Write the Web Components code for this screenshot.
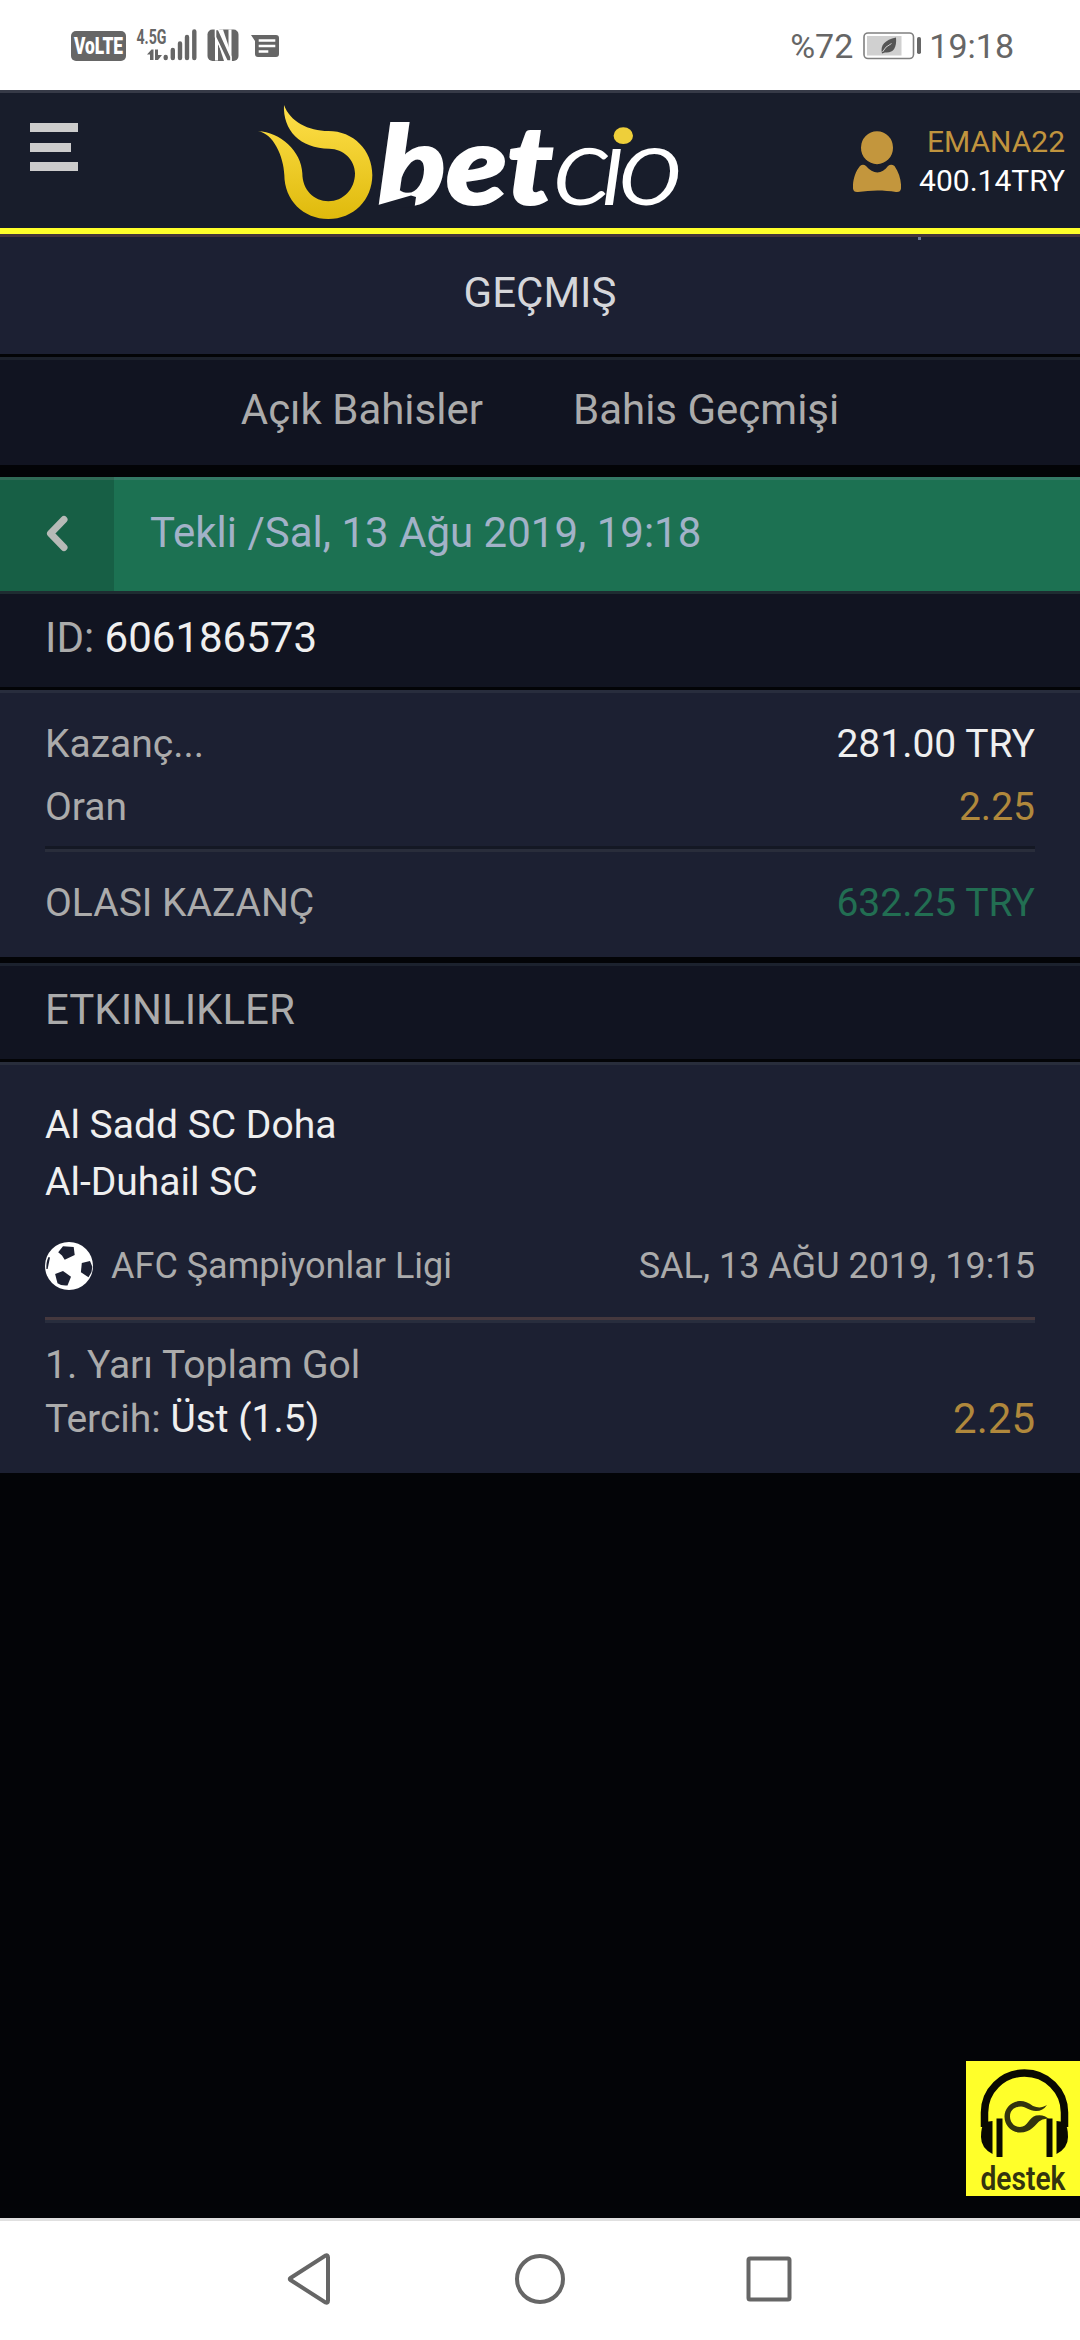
<!DOCTYPE html>
<html lang="tr">
<head>
<meta charset="utf-8">
<title>Betcio</title>
<style>
html,body{margin:0;padding:0;background:#030407}
body{font-family:Roboto,"Noto Sans",sans-serif;width:1080px;height:2340px;overflow:hidden}
</style>
</head>
<body>
<bet-app></bet-app>
<script>
const define = (name, html) => {
  const t = document.createElement('template');
  t.innerHTML = html;
  customElements.define(name, class extends HTMLElement {
    constructor() {
      super();
      this.attachShadow({mode: 'open'}).append(t.content.cloneNode(true));
    }
  });
};

define('status-bar', `
<style>
:host{display:flex;box-sizing:border-box;height:90px;background:#fff;color:#666;justify-content:space-between;padding:20px 66px 0 60px;font-size:34px;line-height:52px}
svg{display:block}
.r{display:flex}
.bat{margin:6px 7px 0 9px}
</style>
<svg width="230" height="50" viewBox="60 20 230 50" fill="#666">
  <rect x="71" y="31" width="55" height="30" rx="5"/>
  <text x="74" y="54" font-size="23" font-weight="900" fill="#fff" textLength="49" lengthAdjust="spacingAndGlyphs">VoLTE</text>
  <text x="136.500" y="44" font-size="20" font-weight="700" textLength="30" lengthAdjust="spacingAndGlyphs">4.5G</text>
  <path d="M147 54.500L151.500 49.500H153.500V60H150V54.500ZM155 49.500H158V55H162L158 60H155Z"/>
  <g stroke="#666" stroke-width="4.400" stroke-linecap="round"><path d="M165.700 57V58M172.800 50V58M180 43.500V58M187 37V58M194.300 31.500V58"/></g>
  <rect x="207.500" y="29.500" width="31" height="31.500" rx="5"/>
  <path d="M216.500 29V60.500M230 29.500V61" stroke="#fff" stroke-width="3"/>
  <path d="M217 29.500H223L230.500 52V61H224L216.500 38Z" fill="#fff"/>
  <path d="M215.500 29.500L218.500 29.500L231 57V61H227L215.500 37Z" fill="#666" stroke="#fff" stroke-width="1.600"/>
  <path d="M251 35H276Q279 35 279 38V54Q279 57 276 57H258Q255 57 255 54V41Z"/>
  <path d="M260 40.500H274M260 46H274M260 51.500H267" stroke="#fff" stroke-width="2.600" stroke-linecap="square"/>
</svg>
<div class="r"><span>%72</span>
<svg class="bat" width="60" height="40" viewBox="861 26 60 40">
  <rect x="863" y="33" width="49.500" height="25.500" rx="4" fill="none" stroke="#808080" stroke-width="1.600"/>
  <rect x="866" y="36" width="34.500" height="19.500" fill="#d0d0d0"/>
  <rect x="916" y="37" width="4" height="17" rx="1.800" fill="#666"/>
  <path d="M881 53.500C879 45 884 40 895 37.500C896 48 892 53.500 884 52.500L881 53.500Z" fill="#555"/>
  <path d="M881.500 52Q884 46.500 890.500 43.500" stroke="#d0d0d0" stroke-width="1" fill="none"/>
</svg>
<span>19:18</span></div>`);

define('site-logo', `
<style>:host{display:block}svg{display:block;overflow:visible}</style>
<svg width="430" height="128" viewBox="255 100 430 128">
  <defs>
    <linearGradient id="g" x1="0" y1="0" x2="0" y2="1"><stop offset="0" stop-color="#ffe04a"/><stop offset="1" stop-color="#dfba0c"/></linearGradient>
    <clipPath id="low"><rect x="545" y="147.500" width="145" height="70"/></clipPath>
  </defs>
  <path transform="translate(240 90) scale(.33333)" fill="url(#g)" d="M54 124C120 125 185 185 187 250C187 300 222 334 265 334C310 334 345 298 345 250C345 210 310 176 268 176C180 176 128 120 132 45C150 95 205 123 265 123C340 123 397 180 397 255C397 330 340 387 265 387C190 387 133 330 133 255C131 200 100 130 54 124Z"/>
  <g font-family="Lato,sans-serif" font-style="italic" fill="#fff">
    <text x="378" y="204" font-size="108" font-weight="900" textLength="175" lengthAdjust="spacingAndGlyphs" stroke="#fff" stroke-width="2">bet</text>
    <path d="M378 205L411 195.500L416 197L414.500 207.500H377Z" fill="#181d2b"/>
    <g clip-path="url(#low)"><text transform="scale(1.17 1)" x="473 513 528.800" y="204" font-size="108" font-weight="300" stroke="#fff" stroke-width="1.800">cio</text></g>
  </g>
  <ellipse cx="623.300" cy="135.700" rx="9.700" ry="8.400" fill="#eecf3a"/>
</svg>`);

define('site-header', `
<style>
:host{display:flex;box-sizing:border-box;height:147px;background:#181d2b;border-top:3px solid #363a47;border-bottom:3px solid #45353c;box-shadow:inset 0 -6px #ffff2a}
.burger{display:flex;flex-direction:column;gap:10.500px;padding:30px 0 0 30px;width:255px;box-sizing:border-box;flex:none}
.burger i{display:block;width:48px;height:9px;background:#ccc}
.burger i:nth-child(2){width:40.500px}
site-logo{margin-top:7px}
.user{margin-left:auto;display:flex;padding-right:15px}
svg{display:block;margin:35px 18px 0 0}
.t{padding-top:29px;text-align:right;font-size:30px;line-height:39px;color:#fff}
.t b{display:block;font-weight:400;color:#c0943e}
</style>
<div class="burger"><i></i><i></i><i></i></div>
<site-logo></site-logo>
<div class="user">
<svg width="48" height="66" viewBox="853 128 48 66" fill="#c3963d"><ellipse cx="877" cy="147.700" rx="16" ry="16.500"/><path d="M860 166Q863 163.500 866 166C873 174.500 882 174.500 888 166Q891 163.500 894.500 166C899.500 173 901.500 182 901 188.500Q900.500 192.500 896 192C884 190 871 190 858 192Q853.500 192.500 853 188.500C852.500 181 855 172 860 166Z"/></svg>
<div class="t"><b>EMANA22</b>400.14TRY</div></div>`);

define('page-title', `
<style>
:host{display:block;box-sizing:border-box;height:117px;background:#1c2033;text-align:center;font-size:42px;line-height:111px;color:#d5d6da}
:host::before{content:"";display:block;width:3px;height:3px;margin:0 0 -3px 918px;background:#6b7799}
</style><slot></slot>`);

define('tab-row', `
<style>
:host{display:flex;box-sizing:border-box;height:111px;justify-content:center;gap:90px;background:#111421;border-top:3px solid #030407;box-shadow:inset 0 3px #1c212c;font-size:42px;line-height:106px;color:#ababab}
</style><slot></slot>`);

define('coupon-bar', `
<style>
:host{display:flex;box-sizing:border-box;height:114px;margin-top:12px;background:#1c7152;font-size:42px;line-height:112px;color:#a2b2c8;box-shadow:inset 0 3px #347965}
.back{width:114px;background:#175f45;margin-right:36px;box-shadow:inset 0 3px #306a56}
svg{display:block}
</style>
<div class="back"><svg width="114" height="114" viewBox="0 477 114 114"><path d="M64 519.500L50.500 533.500L64 547.500" fill="none" stroke="#b7bab7" stroke-width="7" stroke-linecap="round" stroke-linejoin="round"/></svg></div>
<slot></slot>`);

define('section-bar', `
<style>
:host{display:block;box-sizing:border-box;height:99px;padding:0 45px;background:#111421;border-bottom:3px solid #030407;box-shadow:inset 0 3px var(--edge,#1c222e);font-size:42px;line-height:94px;color:#ababab}
::slotted(b){font-weight:400;color:#efefef}
</style><slot></slot>`);

define('kv-row', `
<style>
:host{display:flex;justify-content:space-between;font-size:39px;line-height:63px;color:#ababab}
.v{color:var(--value,#efefef);font-size:var(--vsize,inherit)}
</style><slot></slot><span class="v"><slot name="value"></slot></span>`);

define('summary-panel', `
<style>
:host{display:block;box-sizing:border-box;height:267px;padding:23px 45px 0;background:#1c2032;box-shadow:inset 0 3px #282d3d}
hr{margin:7px 0 20px;border:0;height:3px;background:#141824;border-bottom:3px solid #292d3b}
</style><slot></slot><hr><slot name="total"></slot>`);

define('event-card', `
<style>
:host{display:block;box-sizing:border-box;height:411px;padding:35px 45px 0;background:#1c2032;box-shadow:inset 0 3px #282d3b;font-size:39px;color:#ababab}
.teams{line-height:57px;color:#efefef}
.meta{display:flex;align-items:center;height:48px;margin-top:31px;font-size:36px}
.meta svg{display:block;margin-right:18px}
.meta .d{margin-left:auto}
hr{margin:27px 0 15px;border:0;height:3px;background:#45383e;border-bottom:3px solid #282d3d}
.m{line-height:54px}
kv-row{line-height:54px;--value:#b0883c;--vsize:42px}
</style>
<div class="teams"><slot name="home"></slot><br><slot name="away"></slot></div>
<div class="meta"><svg width="48" height="48" viewBox="0 0 48 48"><circle cx="24" cy="24" r="24" fill="#fff"/><g fill="#1c2032"><path d="M13.200 10.300L18 4.200L28.700 5L29.700 13L19.700 17.700L17 13.500Z"/><path d="M36.800 21L45 19L47.300 24.700L46.500 30L43.500 35.200L35.900 30.300Z"/><path d="M10.100 32L18 29L26 34.700L22.500 43.500Q16 44 12.500 41.300Z"/><path d="M3.500 15L5 15.500L2.600 27H1.400Q1 20 3.500 15Z"/></g></svg>
<slot name="league"></slot><span class="d"><slot name="date"></slot></span></div>
<hr>
<div class="m"><slot name="market"></slot></div>
<kv-row><span><slot name="pick"></slot></span><span slot="value"><slot name="odds"></slot></span></kv-row>`);

define('support-button', `
<style>:host{position:absolute;left:966px;top:2061px;width:114px;height:135px;background:#ffff2a}svg{display:block;overflow:visible}</style>
<svg width="114" height="135" viewBox="0 0 114 135">
  <path d="M18.500 66V51.500A40 39.500 0 0 1 98.500 51.500V66" fill="none" stroke="#0a0a02" stroke-width="7.500"/>
  <path d="M26.500 60V93Q15 87 15 76T19 61ZM90.500 60V93Q102 87 102 76T98 61Z" fill="#0a0a02"/>
  <path d="M30.500 57.500H36.500V96H30.500ZM80.500 57.500H86.500V96H80.500Z" fill="#0a0a02"/>
  <path d="M81 44C76 47 72 47 67 45C62 41 57 39.500 53 40C44 41 38.500 48 38.500 55.500C38.500 64 45 71.500 54 71.500C65 71.500 69 64 73 60.500Q77 57 83 58Q78 53 70 54.500C63 56 62 66 54 66C48 66 44 61 44 55.500C44 49 49 45.500 55 45.500C60 45.500 63 50 70 50Q77 50 81 44Z" fill="#33340f"/>
  <text x="14.500" y="129" font-size="34" font-weight="600" fill="#33340f" textLength="85" lengthAdjust="spacingAndGlyphs">destek</text>
</svg>`);

define('nav-bar', `
<style>
:host{display:flex;box-sizing:border-box;height:122px;margin-top:auto;background:#fff;border-top:3px solid #e0e0e0;padding:30px 284px 0 284px;justify-content:space-between}
svg{display:block}
</style>
<svg width="56" height="56" viewBox="284 2251 56 56"><path d="M290.500 2278Q289 2279 290.500 2280L325.500 2302.500Q328 2303.500 328 2300.500V2257.500Q328 2254.500 325.500 2255.500Z" fill="none" stroke="#666" stroke-width="4"/></svg>
<svg width="56" height="56" viewBox="512 2251 56 56"><circle cx="540" cy="2279" r="23" fill="none" stroke="#666" stroke-width="4"/></svg>
<svg width="56" height="56" viewBox="740 2251 56 56"><rect x="748.500" y="2258.500" width="41" height="41" rx="1.500" fill="none" stroke="#666" stroke-width="4"/></svg>`);

define('bet-app', `
<style>
:host{display:flex;flex-direction:column;width:1080px;height:2340px;background:#030407}
.id{--edge:#1e2c31}
summary-panel{margin-bottom:6px}
.odds{--value:#b0883c}
.win{--value:#226e52}
b{font-weight:400;color:#efefef}
</style>
<status-bar></status-bar>
<site-header></site-header>
<page-title>GEÇMIŞ</page-title>
<tab-row><span>Açık Bahisler</span><span>Bahis Geçmişi</span></tab-row>
<coupon-bar>Tekli /Sal, 13 Ağu 2019, 19:18</coupon-bar>
<section-bar class="id">ID: <b>606186573</b></section-bar>
<summary-panel>
  <kv-row>Kazanç...<span slot="value">281.00 TRY</span></kv-row>
  <kv-row class="odds">Oran<span slot="value">2.25</span></kv-row>
  <kv-row class="win" slot="total">OLASI KAZANÇ<span slot="value">632.25 TRY</span></kv-row>
</summary-panel>
<section-bar>ETKINLIKLER</section-bar>
<event-card>
  <span slot="home">Al Sadd SC Doha</span>
  <span slot="away">Al-Duhail SC</span>
  <span slot="league">AFC Şampiyonlar Ligi</span>
  <span slot="date">SAL, 13 AĞU 2019, 19:15</span>
  <span slot="market">1. Yarı Toplam Gol</span>
  <span slot="pick">Tercih: <b>Üst (1.5)</b></span>
  <span slot="odds">2.25</span>
</event-card>
<nav-bar></nav-bar>
<support-button></support-button>`);
</script>
</body>
</html>
